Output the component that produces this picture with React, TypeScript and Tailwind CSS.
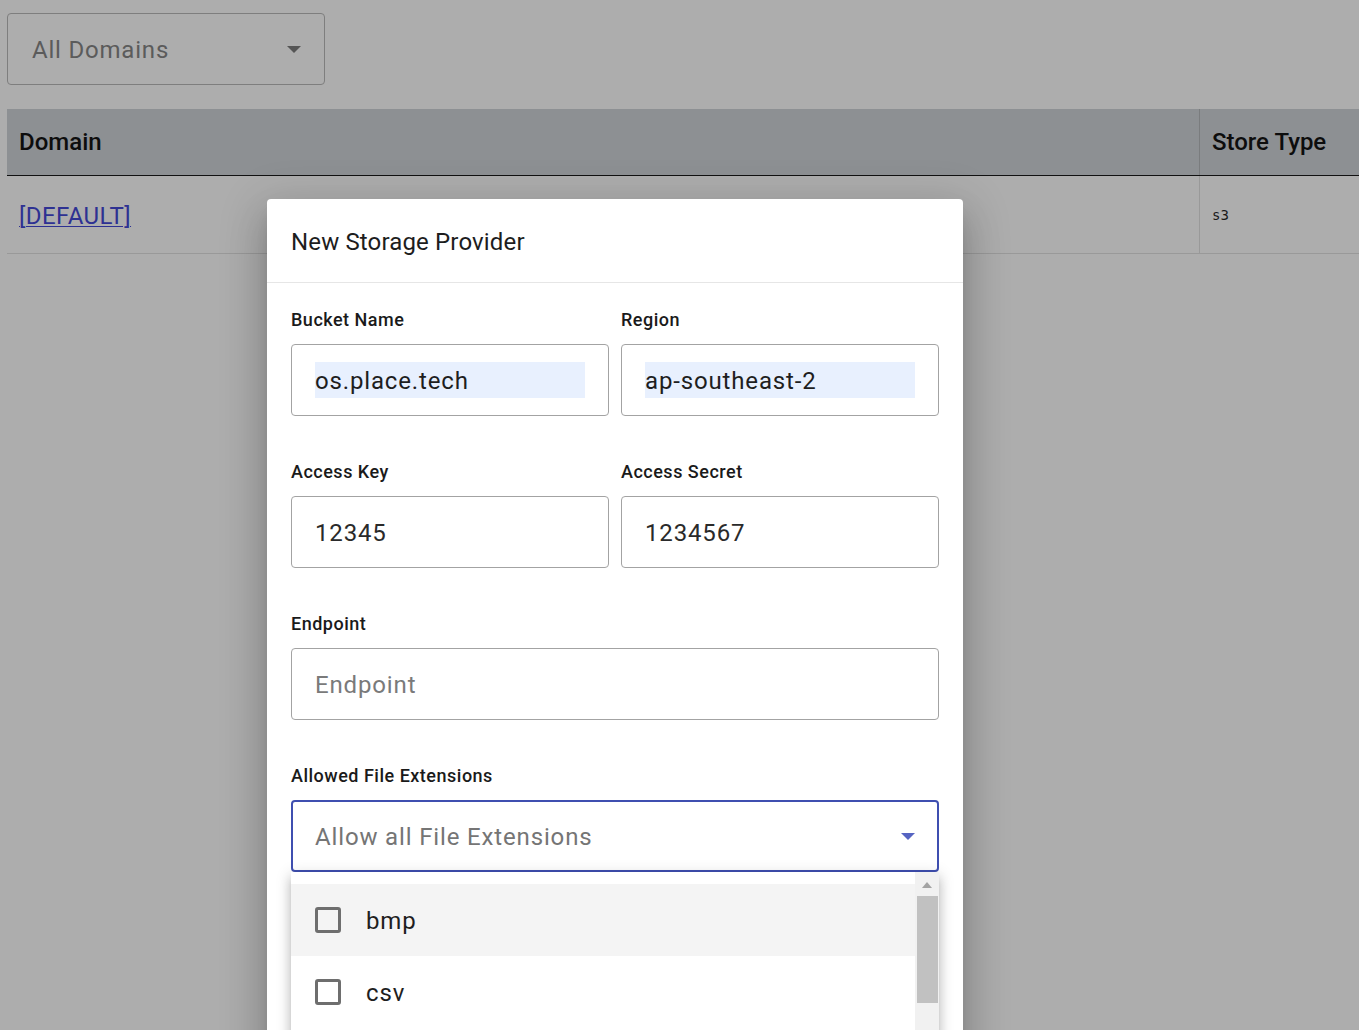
import React from "react";

const font = { fontFamily: "Roboto, 'Liberation Sans', sans-serif" };

function Label({ children }: { children: React.ReactNode }) {
  return <div className="h-6 text-[18px] leading-6 font-medium tracking-[0.5px] text-[#1a1a1a]">{children}</div>;
}

function Field({ label, value, placeholder, autofill }: { label: string; value?: string; placeholder?: string; autofill?: boolean }) {
  return (
    <div className="flex flex-col">
      <Label>{label}</Label>
      <div className="mt-3 flex h-[72px] items-center rounded border border-[#a3a3a3] bg-white px-[23px]">
        <div
          className={`flex h-[36px] w-full items-center pt-[2px] text-[24px] tracking-[0.85px] ${autofill ? "bg-[#e8f0fe] text-[#1e1e1e]" : placeholder ? "text-[#7a7a7a]" : "text-[#2a2a2a]"}`}
        >
          {value ?? placeholder}
        </div>
      </div>
    </div>
  );
}

function Caret({ color }: { color: string }) {
  return (
    <svg width="14" height="7" viewBox="0 0 14 7">
      <path d="M0 0 L14 0 L7 7 Z" fill={color} />
    </svg>
  );
}

function Check({ label, active }: { label: string; active?: boolean }) {
  return (
    <div className={`flex h-[72px] items-center pl-6 ${active ? "bg-[#f4f4f4]" : "bg-white"}`}>
      <div className="h-[26px] w-[26px] rounded-[3px] border-[3px] border-[#6e6e6e]" />
      <div className="ml-[25px] pt-[2px] text-[24px] tracking-[0.85px] text-[#1e1e1e]">{label}</div>
    </div>
  );
}

export default function App() {
  return (
    <div className="relative h-[1030px] w-[1359px] overflow-hidden bg-[#adadad]" style={font}>
      <div className="px-[7px] pt-[13px]">
        <div className="flex h-[72px] w-[318px] items-center justify-between rounded border border-[#7e7e7e] pl-6 pr-[23px]">
          <span className="pt-[2px] text-[24px] tracking-[0.8px] text-[#5b5b5b]">All Domains</span>
          <Caret color="#555555" />
        </div>
        <div className="mt-6 w-[1400px]">
          <div className="flex h-[67px] border-b border-[#111] bg-[#8d9093]">
            <div className="flex w-[1193px] items-center border-r border-[#7a7c7e] pl-3 text-[24px] font-medium text-[#0d0d0d]">
              Domain
            </div>
            <div className="flex flex-1 items-center pl-3 text-[24px] font-medium text-[#0d0d0d]">Store Type</div>
          </div>
          <div className="flex h-[78px] border-b border-[#999]">
            <div className="flex w-[1193px] items-center border-r border-[#999] pl-3 pt-[3px]">
              <span className="text-[24px] tracking-[0.4px] text-[#2e3192] underline decoration-1 underline-offset-2">[DEFAULT]</span>
            </div>
            <div className="flex flex-1 items-center pl-3 pt-[2px] text-[14px] text-[#1a1a1a]" style={{ fontFamily: "'DejaVu Sans Mono', monospace" }}>
              s3
            </div>
          </div>
        </div>
      </div>

      <div className="absolute left-[267px] top-[199px] w-[696px] rounded-t-[4px] bg-white shadow-[0_11px_15px_-7px_rgba(0,0,0,0.2),0_24px_38px_3px_rgba(0,0,0,0.14),0_9px_46px_8px_rgba(0,0,0,0.12)]">
        <div className="flex h-[84px] items-center border-b border-[#e6e6e6] px-6 pt-[2px] text-[24px] tracking-[0.15px] text-[#1d1d1d]">
          New Storage Provider
        </div>
        <div className="px-6 pt-[25px]">
          <div className="grid grid-cols-2 gap-x-[12px] gap-y-[44px]">
            <Field label="Bucket Name" value="os.place.tech" autofill />
            <Field label="Region" value="ap-southeast-2" autofill />
            <Field label="Access Key" value="12345" />
            <Field label="Access Secret" value="1234567" />
            <div className="col-span-2">
              <Field label="Endpoint" placeholder="Endpoint" />
            </div>
            <div className="col-span-2 flex flex-col">
              <Label>Allowed File Extensions</Label>
              <div className="relative mt-3">
                <div className="flex h-[72px] items-center justify-between rounded border-2 border-[#3f4fb0] bg-white pl-[22px] pr-[22px]">
                  <span className="pt-[2px] text-[24px] tracking-[0.85px] text-[#757575]">Allow all File Extensions</span>
                  <Caret color="#5664c2" />
                </div>
                <div className="absolute left-0 right-0 top-[72px] z-10 h-[200px] bg-white shadow-[0_5px_5px_-3px_rgba(0,0,0,0.2),0_8px_10px_1px_rgba(0,0,0,0.14),0_3px_14px_2px_rgba(0,0,0,0.12)]">
                  <div className="flex h-full">
                    <div className="flex-1 pt-3">
                      <Check label="bmp" active />
                      <Check label="csv" />
                    </div>
                    <div className="flex w-[24px] flex-col items-center bg-[#f1f1f1]">
                      <svg className="mt-[10px]" width="10" height="6" viewBox="0 0 10 6">
                        <path d="M0 6 L5 0 L10 6 Z" fill="#a3a3a3" />
                      </svg>
                      <div className="mt-[8px] h-[107px] w-[21px] bg-[#c1c1c1]" />
                    </div>
                  </div>
                </div>
              </div>
            </div>
          </div>
          <div className="h-[200px]" />
        </div>
      </div>
    </div>
  );
}
